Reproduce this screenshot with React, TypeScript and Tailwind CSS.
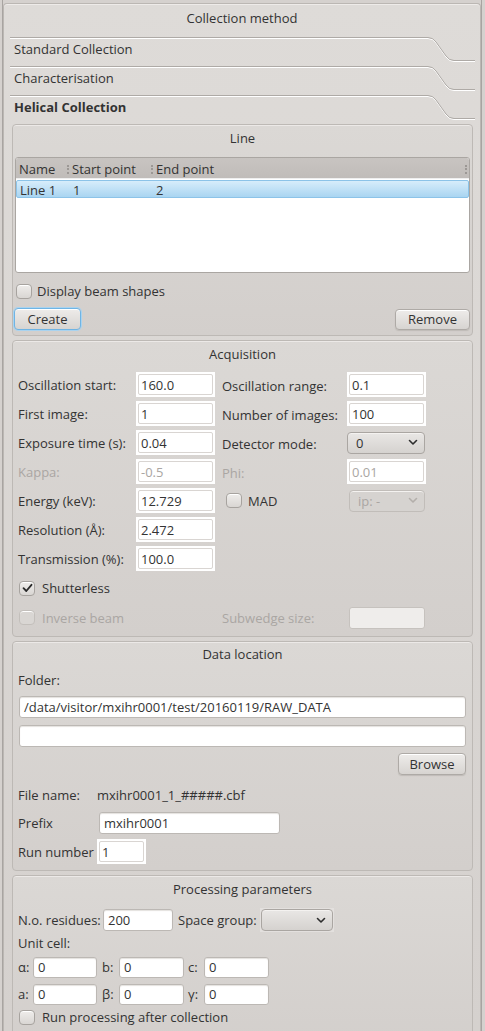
import React from "react";

const TXT = "text-[13px] leading-[16px] text-[#333333]";
const DIS = "text-[13px] leading-[16px] text-[#aaa6a3]";

function TabHeader({ label, bold }: { label: string; bold?: boolean }) {
  return (
    <div className="relative h-[29px] w-[465px]">
      <svg className="absolute left-0 top-0" width="465" height="29" viewBox="0 0 465 29">
        <path d="M0 1.5 H418 Q423 1.5 426 6 L436 20 Q439 24.5 444 24.5 H465" fill="none" stroke="#ffffff" strokeWidth="1" />
        <path d="M0 0.5 H418 Q423 0.5 426 5 L436 19 Q439 23.5 444 23.5 H465" fill="none" stroke="#aeaaa6" strokeWidth="1" />
      </svg>
      <div className={`relative pl-[4px] pt-[4px] ${TXT} ${bold ? "font-bold" : ""}`}>{label}</div>
    </div>
  );
}

function GroupBox({ title, className, children, titlePt = "pt-[5px]" }: { title: string; className?: string; children: React.ReactNode; titlePt?: string }) {
  return (
    <div className={`rounded-[4px] border border-[#bdb9b5] bg-gradient-to-b from-[#dbd8d5] to-[#d3cfcc] shadow-[inset_0_1px_0_#ece9e7] ${className ?? ""}`}>
      <div className={`${titlePt} text-center ${TXT}`}>{title}</div>
      {children}
    </div>
  );
}

function Checkbox({ checked, disabled }: { checked?: boolean; disabled?: boolean }) {
  return (
    <div
      className={`flex h-[15px] w-[16px] shrink-0 items-center justify-center rounded-[4px] border ${
        disabled ? "border-[#c3bfbb] bg-[#d9d6d3]" : "border-[#a7a39f] bg-gradient-to-b from-[#efedeb] to-[#d9d6d3]"
      } shadow-[inset_0_1px_0_#ffffff]`}
    >
      {checked && (
        <svg width="11" height="10" viewBox="0 0 11 10">
          <path d="M1.5 5.2 L4.3 8 L9.5 1.8" fill="none" stroke="#2a2a2a" strokeWidth="1.8" strokeLinecap="round" strokeLinejoin="round" />
        </svg>
      )}
    </div>
  );
}

function WhiteInput({ value, w, disabled }: { value: string; w: string; disabled?: boolean }) {
  return (
    <div className={`${w} h-[25px] shrink-0 bg-white p-[2px]`}>
      <div className={`flex h-full items-center rounded-[2px] border border-[#d9d5d2] pl-[2px] ${disabled ? DIS : TXT}`}>{value}</div>
    </div>
  );
}

function Input({ value, className }: { value: string; className: string }) {
  return (
    <div className={`flex shrink-0 items-center rounded-[3px] border border-[#bcb8b4] bg-white pl-[4px] shadow-[inset_0_1px_1px_#e4e1de] ${TXT} ${className}`}>
      {value}
    </div>
  );
}

function Chevron({ color }: { color: string }) {
  return (
    <svg width="10" height="7" viewBox="0 0 10 7">
      <path d="M1.5 1.5 L5 5 L8.5 1.5" fill="none" stroke={color} strokeWidth="1.6" strokeLinecap="round" strokeLinejoin="round" />
    </svg>
  );
}

function Select({ value, className, disabled }: { value: string; className: string; disabled?: boolean }) {
  return (
    <div
      className={`flex shrink-0 items-center justify-between rounded-[4px] border pl-[8px] pr-[6px] shadow-[inset_0_1px_0_#f4f2f0] ${
        disabled ? "border-[#c1bdb9] bg-[#d6d3d0]" : "border-[#aaa6a2] bg-gradient-to-b from-[#e9e7e5] to-[#d5d2cf]"
      } ${className}`}
    >
      <span className={disabled ? DIS : TXT}>{value}</span>
      <Chevron color={disabled ? "#b3afab" : "#2e2e2e"} />
    </div>
  );
}

function Button({ label, className, focus }: { label: string; className: string; focus?: boolean }) {
  return (
    <div
      className={`flex items-center justify-center rounded-[4px] border ${
        focus ? "border-[#6fb4e4] shadow-[0_0_0_1px_#a9d3ef,inset_0_1px_0_#ffffff]" : "border-[#aeaaa6] shadow-[inset_0_1px_0_#ffffff,0_1px_1px_#bfbbb7]"
      } bg-gradient-to-b from-[#eeecea] to-[#d7d4d1] ${TXT} ${className}`}
    >
      {label}
    </div>
  );
}

function AcqRow({ l, lv, r, rv, ldis }: { l: string; lv: string; r: React.ReactNode; rv: React.ReactNode; ldis?: boolean }) {
  return (
    <div className="flex h-[29px] items-center">
      <div className={`w-[118px] shrink-0 ${ldis ? DIS : TXT}`}>{l}</div>
      <WhiteInput value={lv} w="w-[79px]" disabled={ldis} />
      <div className="ml-[7px] w-[125px] shrink-0">{r}</div>
      {rv}
    </div>
  );
}

export default function App() {
  return (
    <div className="flex h-[1031px] w-[485px] items-start overflow-hidden bg-[#d5d1ce] font-['Open_Sans','Noto_Sans',sans-serif]">
      <div className="w-[2px] shrink-0" />
      <div className="h-[1031px] w-[1px] shrink-0 bg-[#a8a4a1]" />
      <div className="mt-[3px] h-[1028px] w-[478px] shrink-0 rounded-t-[4px] border border-b-0 border-[#bbb7b3] bg-gradient-to-b from-[#dedbd8] to-[#d5d1ce] shadow-[inset_0_1px_0_#eeebe9]">
        <div className={`h-[33px] pt-[6px] text-center ${TXT}`}>Collection method</div>
        <div className="ml-[6px]">
          <TabHeader label="Standard Collection" />
          <TabHeader label="Characterisation" />
          <TabHeader label="Helical Collection" bold />

          {/* Line */}
          <GroupBox title="Line" className="ml-[2px] h-[212px] w-[461px]">
            <div className="mx-[2px] mt-[11px] h-[116px] overflow-hidden rounded-[3px] border border-[#aaa6a2] bg-white">
              <div className="flex h-[21px] items-center border-b border-[#eeeeee] bg-gradient-to-b from-[#c8c4c1] to-[#c0bcb9] pt-[2px]">
                <div className={`w-[51px] pl-[3px] ${TXT}`}>Name</div>
                <div className="h-[9px] w-[1px] border-l-2 border-dotted border-[#9c9895]" />
                <div className={`w-[82px] pl-[3px] ${TXT}`}>Start point</div>
                <div className="h-[9px] w-[1px] border-l-2 border-dotted border-[#9c9895]" />
                <div className={`flex-1 pl-[3px] ${TXT}`}>End point</div>
                <div className="mr-[2px] h-[9px] w-[1px] border-l-2 border-dotted border-[#9c9895]" />
              </div>
              <div className="mt-[1px] flex h-[18px] items-center rounded-[2px] border border-[#8cc3e8] bg-gradient-to-b from-[#d7edfb] to-[#a9d5f1] pt-[1px]">
                <div className={`w-[53px] pl-[3px] ${TXT}`}>Line 1</div>
                <div className={`w-[83px] pl-[3px] ${TXT}`}>1</div>
                <div className={`pl-[3px] ${TXT}`}>2</div>
              </div>
            </div>
            <div className="mt-[10px] flex h-[16px] items-center pl-[3px]">
              <Checkbox />
              <div className={`ml-[5px] ${TXT}`}>Display beam shapes</div>
            </div>
            <div className="mt-[9px] flex items-center justify-between pl-[1px] pr-[2px]">
              <Button label="Create" className="h-[22px] w-[67px]" focus />
              <Button label="Remove" className="h-[21px] w-[75px]" />
            </div>
          </GroupBox>

          {/* Acquisition */}
          <GroupBox title="Acquisition" className="ml-[2px] mt-[4px] h-[297px] w-[461px]">
            <div className="mt-[8px] pl-[5px]">
              <AcqRow l="Oscillation start:" lv="160.0" r={<span className={TXT}>Oscillation range:</span>} rv={<WhiteInput value="0.1" w="w-[79px]" />} />
              <AcqRow l="First image:" lv="1" r={<span className={TXT}>Number of images:</span>} rv={<WhiteInput value="100" w="w-[79px]" />} />
              <AcqRow l="Exposure time (s):" lv="0.04" r={<span className={TXT}>Detector mode:</span>} rv={<Select value="0" className="h-[22px] w-[78px]" />} />
              <AcqRow l="Kappa:" lv="-0.5" ldis r={<span className={DIS}>Phi:</span>} rv={<WhiteInput value="0.01" w="w-[79px]" disabled />} />
              <AcqRow
                l="Energy (keV):"
                lv="12.729"
                r={
                  <div className="flex items-center pl-[4px]">
                    <Checkbox />
                    <span className={`ml-[6px] ${TXT}`}>MAD</span>
                  </div>
                }
                rv={<Select value="ip: -" className="ml-[2px] h-[22px] w-[76px]" disabled />}
              />
              <AcqRow l="Resolution (Å):" lv="2.472" r={null} rv={null} />
              <AcqRow l="Transmission (%):" lv="100.0" r={null} rv={null} />
              <div className="flex h-[30px] items-center pl-[1px]">
                <Checkbox checked />
                <span className={`ml-[7px] ${TXT}`}>Shutterless</span>
              </div>
              <div className="flex h-[29px] items-center pl-[1px]">
                <Checkbox disabled />
                <span className={`ml-[7px] w-[180px] shrink-0 ${DIS}`}>Inverse beam</span>
                <span className={`w-[127px] shrink-0 ${DIS}`}>Subwedge size:</span>
                <div className="h-[22px] w-[76px] shrink-0 rounded-[3px] border border-[#c6c2be] bg-[#efedeb]" />
              </div>
            </div>
          </GroupBox>

          {/* Data location */}
          <GroupBox title="Data location" titlePt="pt-[4px]" className="ml-[2px] mt-[4px] h-[230px] w-[461px]">
            <div className="pl-[5px] pr-[6px]">
              <div className={`mt-[10px] ${TXT}`}>Folder:</div>
              <Input value="/data/visitor/mxihr0001/test/20160119/RAW_DATA" className="ml-[1px] mt-[8px] h-[22px]" />
              <Input value="" className="ml-[1px] mt-[7px] h-[22px]" />
              <div className="mt-[6px] flex justify-end">
                <Button label="Browse" className="h-[22px] w-[68px]" />
              </div>
              <div className="mt-[12px] flex items-center">
                <span className={`w-[79px] shrink-0 ${TXT}`}>File name:</span>
                <span className={TXT}>mxihr0001_1_#####.cbf</span>
              </div>
              <div className="mt-[9px] flex h-[22px] items-center">
                <span className={`w-[81px] shrink-0 ${TXT}`}>Prefix</span>
                <Input value="mxihr0001" className="h-[22px] w-[181px]" />
              </div>
              <div className="mt-[5px] flex h-[25px] items-center">
                <span className={`w-[79px] shrink-0 ${TXT}`}>Run number</span>
                <WhiteInput value="1" w="w-[49px]" />
              </div>
            </div>
          </GroupBox>

          {/* Processing parameters */}
          <GroupBox title="Processing parameters" className="ml-[2px] mt-[4px] h-[170px] w-[461px]">
            <div className="pl-[5px]">
              <div className="mt-[10px] flex h-[26px] items-center">
                <span className={`w-[85px] shrink-0 ${TXT}`}>N.o. residues:</span>
                <Input value="200" className="h-[22px] w-[70px]" />
                <span className={`ml-[5px] w-[82px] shrink-0 ${TXT}`}>Space group:</span>
                <div className="bg-[#e3e0de] p-[1px]">
                  <Select value="" className="h-[22px] w-[72px]" />
                </div>
              </div>
              <div className={`mt-[2px] ${TXT}`}>Unit cell:</div>
              <div className="mt-[5px] flex h-[22px] items-center">
                <span className={`w-[15px] shrink-0 ${TXT}`}>α:</span>
                <Input value="0" className="h-[21px] w-[64px]" />
                <span className={`ml-[5px] w-[17px] shrink-0 ${TXT}`}>b:</span>
                <Input value="0" className="h-[21px] w-[65px]" />
                <span className={`ml-[4px] w-[16px] shrink-0 ${TXT}`}>c:</span>
                <Input value="0" className="h-[21px] w-[65px]" />
              </div>
              <div className="mt-[5px] flex h-[22px] items-center">
                <span className={`w-[15px] shrink-0 ${TXT}`}>a:</span>
                <Input value="0" className="h-[21px] w-[64px]" />
                <span className={`ml-[5px] w-[17px] shrink-0 ${TXT}`}>β:</span>
                <Input value="0" className="h-[21px] w-[65px]" />
                <span className={`ml-[4px] w-[16px] shrink-0 ${TXT}`}>γ:</span>
                <Input value="0" className="h-[21px] w-[65px]" />
              </div>
              <div className="mt-[4px] flex h-[16px] items-center pl-[1px]">
                <Checkbox />
                <span className={`ml-[7px] ${TXT}`}>Run processing after collection</span>
              </div>
            </div>
          </GroupBox>
        </div>
      </div>
      <div className="h-[1031px] w-[1px] shrink-0 bg-[#a8a4a1]" />
    </div>
  );
}
